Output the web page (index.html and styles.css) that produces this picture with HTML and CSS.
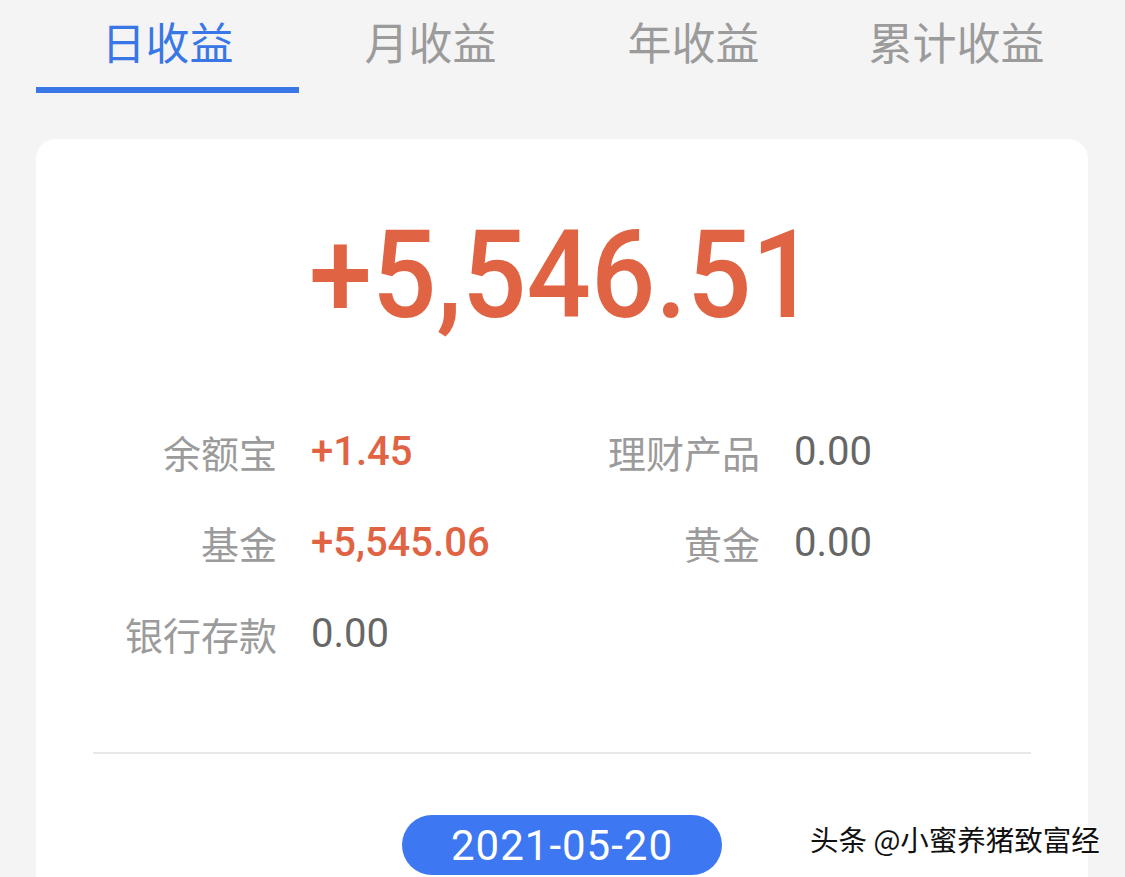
FILE: index.html
```html
<!DOCTYPE html>
<html lang="zh-CN">
<head>
    <meta charset="UTF-8">
    <meta name="viewport" content="width=device-width, initial-scale=1.0">
    <title>收益</title>
    <link rel="stylesheet" href="styles.css">
</head>
<body>

<!-- Tabs -->
<div class="tabs">
    <div class="tab active">日收益</div>
    <div class="tab">月收益</div>
    <div class="tab">年收益</div>
    <div class="tab">累计收益</div>
</div>

<div class="card">
    <div class="total"><span class="total-num">+5,546.51</span></div>

    <div class="detail">
        <div class="label">余额宝</div>
        <div class="value up">+1.45</div>
        <div class="label">理财产品</div>
        <div class="value">0.00</div>

        <div class="label">基金</div>
        <div class="value up">+5,545.06</div>
        <div class="label">黄金</div>
        <div class="value">0.00</div>

        <div class="label">银行存款</div>
        <div class="value">0.00</div>
    </div>

    <div class="divider"></div>

    <div class="date-row">
        <span class="date-pill">2021-05-20</span>
    </div>
</div>

<div class="watermark">头条 @小蜜养猪致富经</div>

</body>
</html>
```

FILE: styles.css
```css
body {
    margin: 0;
    padding: 0 37px 0 36px;
    background-color: #f4f4f4;
    font-family: Roboto, "Noto Sans CJK SC", sans-serif;
    height: 877px;
    overflow: hidden;
    position: relative;
}

.tabs {
    display: flex;
}

.tab {
    flex: 1;
    text-align: center;
    font-family: "Noto Sans CJK SC", sans-serif;
    font-size: 44px;
    line-height: 82px;
    height: 87px;
    color: #9b9b9b;
    border-bottom: 6px solid transparent;
}

.tab.active {
    color: #3a77e6;
    border-bottom-color: #3a77e6;
}

.card {
    margin-top: 46px;
    background-color: #fff;
    border-radius: 20px;
    padding: 76px 57px 0 57px;
    height: 800px;
}

.total {
    text-align: center;
    line-height: 122px;
    height: 122px;
}

.total-num {
    display: inline-block;
    font-family: Roboto, sans-serif;
    font-size: 122px;
    font-weight: 500;
    color: #e06343;
    transform: scaleX(0.93);
}

.detail {
    display: grid;
    grid-template-columns: 184px 215px 200px auto;
    column-gap: 34px;
    row-gap: 41px;
    margin-top: 90px;
}

.label {
    text-align: right;
    font-family: "Noto Sans CJK SC", sans-serif;
    font-size: 38px;
    line-height: 50px;
    color: #9b9b9b;
}

.value {
    font-family: Roboto, sans-serif;
    font-size: 40px;
    line-height: 50px;
    color: #666;
}

.value.up {
    color: #e06343;
    font-weight: 500;
}

.divider {
    margin-top: 93px;
    height: 2px;
    background-color: #e8e8e8;
}

.date-row {
    margin-top: 61px;
    padding-left: 309px;
}

.date-pill {
    display: inline-block;
    width: 320px;
    height: 60px;
    line-height: 62px;
    border-radius: 30px;
    background-color: #3d78f2;
    color: #fff;
    text-align: center;
    font-family: Roboto, sans-serif;
    font-size: 42px;
    letter-spacing: 1px;
}

/* watermark sits over the card */
.watermark {
    position: absolute;
    left: 810px;
    top: 818px;
    font-family: "Noto Sans CJK SC", sans-serif;
    font-size: 28.5px;
    color: #111;
    text-shadow: 1px 1px 0 #fff, -1px -1px 0 #fff, 1px -1px 0 #fff, -1px 1px 0 #fff;
}
```
